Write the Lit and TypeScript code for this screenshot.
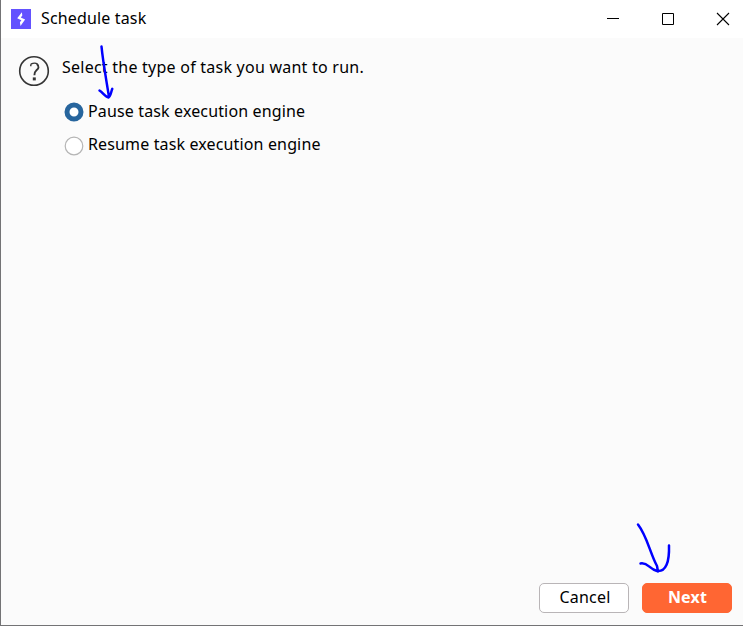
import { LitElement, html, css } from "lit";
import { customElement, state } from "lit/decorators.js";

@customElement("app-root")
export class AppRoot extends LitElement {
  @state() private selected = 0;

  static styles = css`
    :host {
      display: block;
      position: relative;
      box-sizing: border-box;
      width: 743px;
      height: 626px;
      overflow: hidden;
      border-left: 1px solid #737375;
      border-bottom: 1px solid #737375;
      background: #fbfbfb;
      color: #000;
      font: 16px/24px "Noto Sans", "Open Sans", sans-serif;
    }
    .window { display: flex; flex-direction: column; height: 100%; }
    .titlebar {
      display: flex;
      align-items: center;
      height: 38px;
      flex: none;
      background: #fff;
      padding-left: 10px;
    }
    .title { margin: -2px auto 0 10px; letter-spacing: 0.15px; }
    .controls { display: flex; }
    .controls svg { width: 55px; height: 38px; }
    .controls svg:last-child { width: 47px; }
    svg { display: block; flex: none; }
    .content { display: flex; flex: 1; padding: 17px 0 0 17px; gap: 12px; }
    .prompt { display: block; height: 24px; letter-spacing: 0.24px; }
    .options { display: flex; flex-direction: column; gap: 9px; padding: 20px 0 0 2px; }
    .option { display: flex; gap: 4px; height: 24px; letter-spacing: 0.14px; }
    .option svg { margin-top: 3px; }
    .option:last-child svg { margin-top: 4px; }
    .footer { display: flex; justify-content: flex-end; gap: 13px; padding: 0 11px 12px 0; }
    button {
      box-sizing: border-box;
      width: 90px;
      height: 30px;
      padding: 0 0 2px 2px;
      border: 1px solid #b9b5b7;
      border-radius: 5px;
      background: #fff;
      color: #000;
      font: inherit;
      letter-spacing: 0.2px;
    }
    .primary { background: #ff6633; border-color: #ff6633; color: #fff; font-weight: 700; padding-left: 1px; }
    .ink {
      position: absolute;
      left: -1px;
      top: 0;
      pointer-events: none;
      fill: none;
      stroke: #0000ff;
      stroke-width: 2.5;
      stroke-linecap: round;
      stroke-linejoin: round;
    }
  `;

  render() {
    return html`
      <div class="window">
        <div class="titlebar">
          <svg width="20" height="20" viewBox="0 0 20 20">
            <rect width="20" height="20" fill="#6352ff" />
            <path d="M10.9 3.2 6.2 9.2 10.4 11.3 8.9 13.3 9.5 17 14.1 10.6 9.8 8.6 11.3 6.6Z" fill="#fff" />
          </svg>
          <span class="title">Schedule task</span>
          <div class="controls">
            <svg viewBox="0 0 55 38"><path d="M21 18.5h12" stroke="#000" /></svg>
            <svg viewBox="0 0 55 38"><path d="M21.5 13.5h11v11h-11z" fill="none" stroke="#000" /></svg>
            <svg viewBox="0 0 47 38"><path d="M21 13l12 12M33 13l-12 12" stroke="#000" stroke-width="1.1" /></svg>
          </div>
        </div>
        <div class="content">
          <svg width="32" height="32" viewBox="0 0 32 32" fill="none" stroke="#353535">
            <circle cx="16" cy="16" r="14.3" stroke-width="1.6" />
            <path d="M12.8 11.2V9.3" stroke-width="1.4" />
            <path d="M12.8 9.2C15.5 7.9 18.2 8.1 19.4 9.2" stroke-width="1.4" />
            <path d="M19 9C21.6 11.6 20.6 13.8 18.3 15.4C16.6 16.7 16.4 17.8 16.4 20.2" stroke-width="1.9" />
            <path d="M16.3 22.4v3" stroke-width="3" />
          </svg>
          <div>
            <span class="prompt">Select the type of task you want to run.</span>
            <div class="options">
              ${["Pause task execution engine", "Resume task execution engine"].map(
                (label, i) => html`
                  <div class="option" @click=${() => (this.selected = i)}>
                    ${i === this.selected
                      ? html`<svg width="20" height="20" viewBox="0 0 20 20"><circle cx="10" cy="10" r="7" fill="#fff" stroke="#27659d" stroke-width="5" /></svg>`
                      : html`<svg width="20" height="20" viewBox="0 0 20 20"><circle cx="10" cy="10" r="8.8" fill="#fff" stroke="#b5b5b5" stroke-width="1.2" /></svg>`}
                    <span>${label}</span>
                  </div>
                `
              )}
            </div>
          </div>
        </div>
        <div class="footer">
          <button>Cancel</button>
          <button class="primary">Next</button>
        </div>
      </div>
      <svg class="ink" width="743" height="626" viewBox="0 0 743 626">
        <path d="M101.5 46.5C103 62 106 78 109 97M99.5 90.5C103 92.5 105 97 108.5 97.5C110.5 97 111 92 112.3 88.8" />
        <path d="M638 524.5C647 536 650 553 657 566L658 571.5M640.5 563.5C648 562 649 569 657 571C666 572 669.5 562 669 545.5" />
      </svg>
    `;
  }
}
